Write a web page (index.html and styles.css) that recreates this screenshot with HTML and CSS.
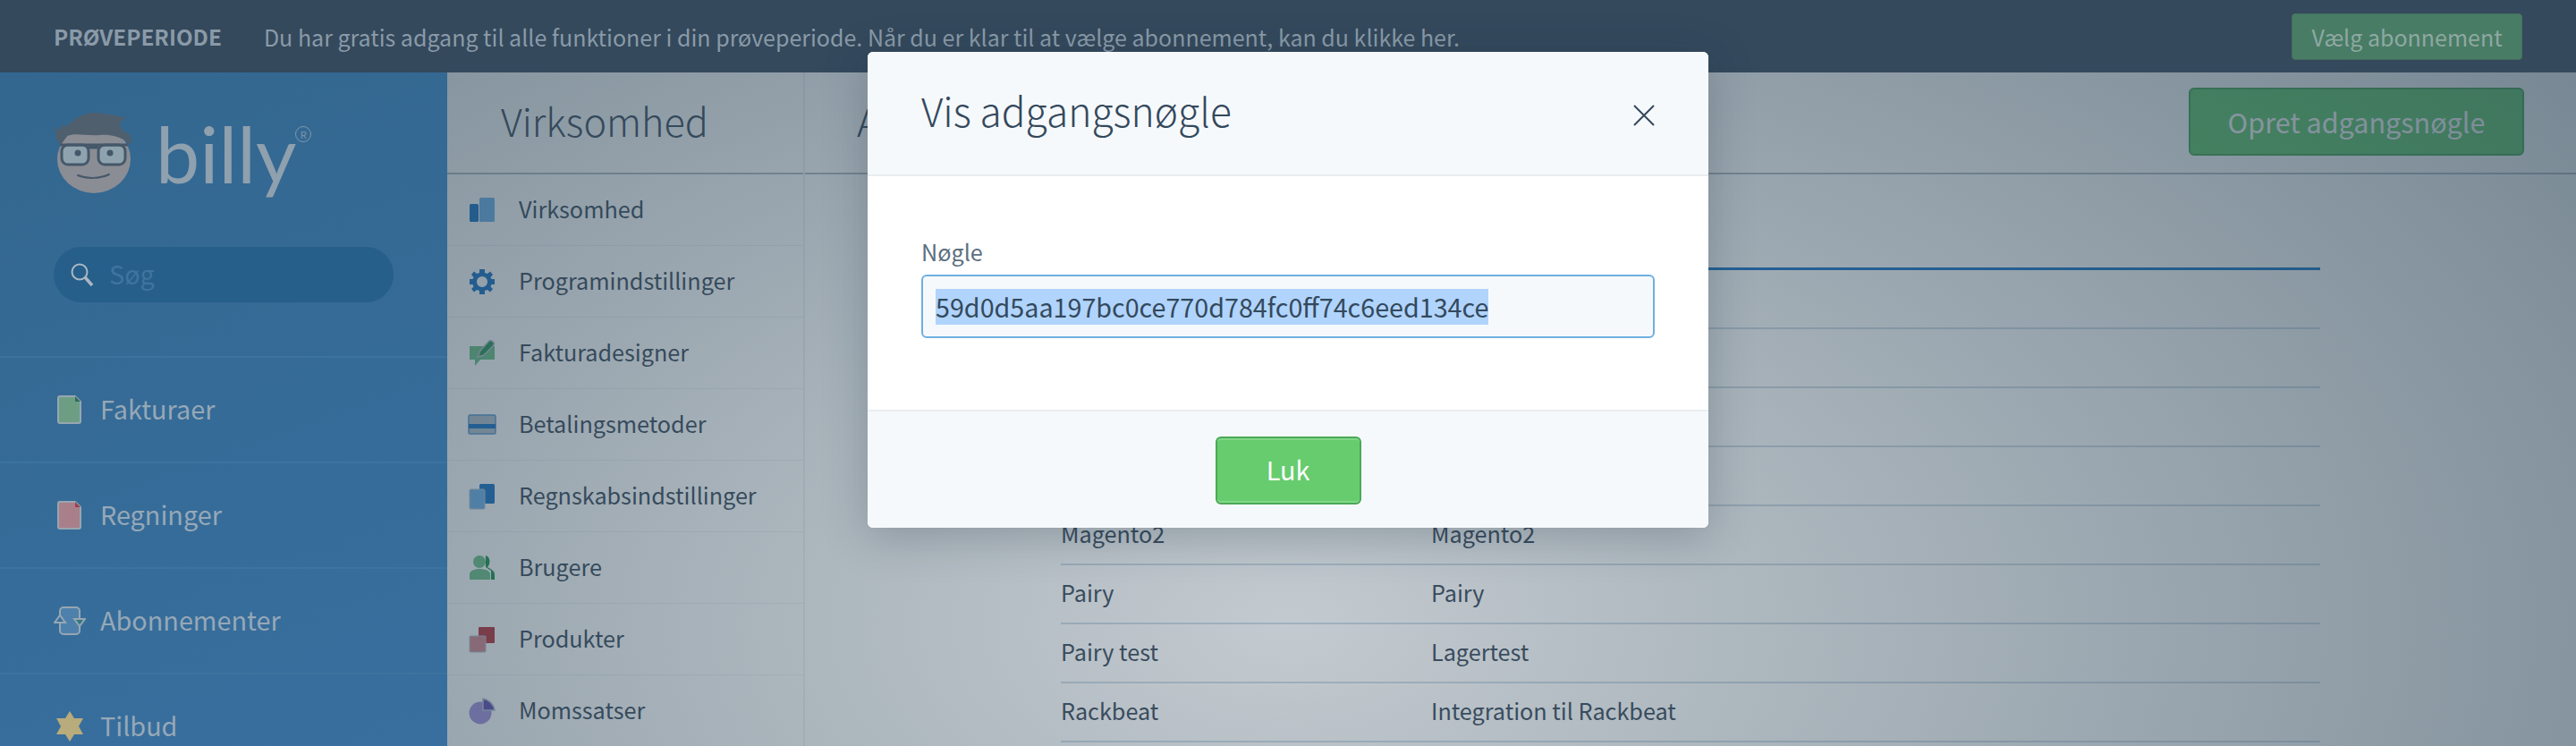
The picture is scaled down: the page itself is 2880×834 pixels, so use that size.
FILE: index.html
```html
<!DOCTYPE html>
<html lang="da">

<head>
	<meta charset="UTF-8">
	<title>Vis adgangsnøgle</title>
	<link rel="stylesheet" href="styles.css">
</head>

<body>
	<div class="topbar">
		<span class="trial-label">PRØVEPERIODE</span>
		<span class="trial-text">Du har gratis adgang til alle funktioner i din prøveperiode. Når du er klar til at vælge abonnement, kan du klikke her.</span>
		<a class="trial-button">Vælg abonnement</a>
	</div>

	<div class="layout">
		<div class="sidebar">
			<div class="logo">
				<svg class="logo-face" width="88" height="92" viewBox="0 0 88 92">
					<ellipse cx="44" cy="52" rx="41" ry="38" fill="#8b8d94"/>
					<path d="M0 16 L5 20 L10 12 L13 16 C22 6 34 0 44 0 C56 0 68 3 80 6 C74 9 72 11 73 15 L78 21 L84 24 L87 36 L80 32 C72 26 60 24 50 25 C36 26 22 22 14 26 L7 36 L2 30 Z" fill="#4f5f6e"/>
					<rect x="8" y="36" width="30" height="22" rx="7" fill="#8ea3ae" stroke="#45586a" stroke-width="3"/>
					<rect x="49" y="36" width="30" height="22" rx="7" fill="#8ea3ae" stroke="#45586a" stroke-width="3"/>
					<path d="M6 36 H82 M38 39 H49" stroke="#45586a" stroke-width="3" fill="none"/>
					<circle cx="26" cy="45" r="3.500" fill="#45586a"/>
					<circle cx="62" cy="45" r="3.500" fill="#45586a"/>
					<path d="M26 70 C36 74 50 74 61 69" stroke="#45586a" stroke-width="2" fill="none" stroke-linecap="round"/>
				</svg>
				<span class="logo-text">billy</span>
				<span class="logo-reg">R</span>
			</div>
			<div class="search">
				<svg width="28" height="28" viewBox="0 0 28 28">
					<circle cx="11" cy="11" r="8.500" fill="none" stroke="#a9b7c3" stroke-width="2"/>
					<path d="M17 17 L25 26" stroke="#a9b7c3" stroke-width="3.500"/>
				</svg>
				<span>Søg</span>
			</div>
			<div class="nav">
				<div class="nav-item">
					<svg width="36" height="34" viewBox="0 0 36 34">
						<path d="M7 2 H24 L30 8 V30 Q30 32 28 32 H7 Q5 32 5 30 V4 Q5 2 7 2 Z" fill="#6d9e84" stroke="#97a6b2" stroke-width="2"/>
						<path d="M24 2 L30 8 H24 Z" fill="#2f6e5a"/>
					</svg>
					Fakturaer
				</div>
				<div class="nav-item">
					<svg width="36" height="34" viewBox="0 0 36 34">
						<path d="M7 2 H24 L30 8 V30 Q30 32 28 32 H7 Q5 32 5 30 V4 Q5 2 7 2 Z" fill="#a9808a" stroke="#97a6b2" stroke-width="2"/>
						<path d="M24 2 L30 8 H24 Z" fill="#9e3f4c"/>
					</svg>
					Regninger
				</div>
				<div class="nav-item">
					<svg width="36" height="34" viewBox="0 0 36 34">
						<rect x="7" y="2" width="22" height="30" rx="4" fill="#4d81ab" stroke="#97a6b2" stroke-width="2"/>
						<path d="M1 19 L7 11 L13 19 Z" fill="#35709f" stroke="#97a6b2" stroke-width="2"/>
						<path d="M23 15 L29 23 L35 15 Z" fill="#2f7a80" stroke="#97a6b2" stroke-width="2"/>
					</svg>
					Abonnementer
				</div>
				<div class="nav-item">
					<svg width="36" height="34" viewBox="0 0 36 34">
						<path d="M18 0 L23 8 L33 8 L28 17 L33 26 L23 26 L18 34 L13 26 L3 26 L8 17 L3 8 L13 8 Z" fill="#b8ab7c"/>
					</svg>
					Tilbud
				</div>
			</div>
		</div>

		<div class="settings">
			<div class="settings-title">Virksomhed</div>
			<div class="settings-item">
				<svg width="30" height="30" viewBox="0 0 30 30">
					<rect x="1" y="8" width="10" height="20" rx="1.500" fill="#1f78c8"/>
					<rect x="12" y="1" width="17" height="27" rx="1.500" fill="#72b4ec"/>
				</svg>
				Virksomhed
			</div>
			<div class="settings-item">
				<svg width="30" height="30" viewBox="0 0 30 30">
					<path d="M15 9 A6 6 0 1 0 15.010 9 Z M12 1 H18 V5 L21 6 L24 3.500 L27 7 L24.500 10 L25.500 12 H29 V18 H25.500 L24.500 20.500 L27 23 L24 26.500 L21 24 L18 25 V29 H12 V25 L9 24 L6 26.500 L3 23 L5.500 20.500 L4.500 18 H1 V12 H4.500 L5.500 10 L3 7 L6 3.500 L9 6 L12 5 Z" fill="#1f78c8" fill-rule="evenodd"/>
				</svg>
				Programindstillinger
			</div>
			<div class="settings-item">
				<svg width="30" height="30" viewBox="0 0 30 30">
					<path d="M1 7 H29 V22 H13 L7 29 V22 H1 Z" fill="#6fc48a"/>
					<path d="M10 19 L13 12 L23 1 Q26 0 28 3 Q29 5 27 7 L17 17 Z" fill="#2e9a58" stroke="#b9c3ca" stroke-width="1.500"/>
				</svg>
				Fakturadesigner
			</div>
			<div class="settings-item">
				<svg class="card-icon" width="32" height="30" viewBox="0 0 32 30">
					<rect x="1" y="4" width="30" height="21" rx="1.500" fill="#b5c2cd" stroke="#5e9ad0" stroke-width="1.500"/>
					<rect x="1" y="14" width="30" height="5" fill="#1f78c8"/>
				</svg>
				Betalingsmetoder
			</div>
			<div class="settings-item">
				<svg width="30" height="30" viewBox="0 0 30 30">
					<rect x="12" y="1" width="17" height="22" rx="1.500" fill="#1f78c8"/>
					<rect x="1" y="7" width="17" height="22" rx="1.500" fill="#72b4ec" stroke="#b5c2cd"/>
				</svg>
				Regnskabsindstillinger
			</div>
			<div class="settings-item">
				<svg width="30" height="30" viewBox="0 0 30 30">
					<path d="M19 1 C24 2 25 10 21 14 C24 16 29 18 29 22 V28 H25 V18 L19 14 Z" fill="#1e9a4e"/>
					<circle cx="12" cy="8" r="7" fill="#74c48e"/>
					<path d="M1 28 V22 C1 18 7 16 12 16 C18 16 24 18 24 22 V28 Z" fill="#74c48e"/>
				</svg>
				Brugere
			</div>
			<div class="settings-item">
				<svg width="30" height="30" viewBox="0 0 30 30">
					<rect x="11" y="1" width="18" height="18" rx="1" fill="#bb3a40"/>
					<rect x="1" y="11" width="18" height="18" rx="1" fill="#d88b92" stroke="#b5c2cd"/>
				</svg>
				Produkter
			</div>
			<div class="settings-item">
				<svg width="30" height="30" viewBox="0 0 30 30">
					<circle cx="13" cy="17" r="12.500" fill="#a794e0"/>
					<path d="M16 1 C22 2 28 7 29 14 H16 Z" fill="#6850b8" stroke="#b5c2cd" stroke-width="1.500"/>
				</svg>
				Momssatser
			</div>
		</div>

		<div class="main">
			<div class="main-head">
				<span class="main-title">A</span>
				<a class="green-button">Opret adgangsnøgle</a>
			</div>
			<div class="keys">
				<div class="keys-row"></div>
				<div class="keys-row"></div>
				<div class="keys-row"></div>
				<div class="keys-row"></div>
				<div class="keys-row"><span>Magento2</span><span>Magento2</span></div>
				<div class="keys-row"><span>Pairy</span><span>Pairy</span></div>
				<div class="keys-row"><span>Pairy test</span><span>Lagertest</span></div>
				<div class="keys-row"><span>Rackbeat</span><span>Integration til Rackbeat</span></div>
			</div>
		</div>
	</div>

	<div class="backdrop"></div>

	<div class="modal">
		<div class="modal-head">
			<span class="modal-title">Vis adgangsnøgle</span>
			<svg class="modal-close" width="24" height="24" viewBox="0 0 24 24">
				<path d="M1 1 L23 23 M23 1 L1 23" stroke="#34495c" stroke-width="2" fill="none"/>
			</svg>
		</div>
		<div class="modal-body">
			<div class="key-label">Nøgle</div>
			<div class="key-input"><span class="key-value">59d0d5aa197bc0ce770d784fc0ff74c6eed134ce</span></div>
		</div>
		<div class="modal-foot">
			<a class="close-button">Luk</a>
		</div>
	</div>
</body>

</html>
```

FILE: styles.css
```css
* {
	box-sizing: border-box;
}

body {
	margin: 0;
	height: 834px;
	overflow: hidden;
	background-color: white;
	color: #425162;
	font-family: "Noto Sans CJK SC", "Liberation Sans", sans-serif;
	font-size: 25.200px;
}

.topbar {
	display: flex;
	align-items: center;
	height: 81px;
	padding: 0 60px;
	background-color: #34495c;
	color: #8a9aa8;
	font-size: 25px;
}

.trial-label {
	margin-right: 47px;
	font-size: 24.300px;
	font-weight: bold;
}

.trial-button {
	width: 258px;
	height: 52px;
	margin-left: auto;
	line-height: 50px;
	text-align: center;
	border: 1px solid #44705f;
	border-radius: 4px;
	background-color: #487c65;
	color: #8fa8a2;
}

.layout {
	display: flex;
	height: 753px;
}

.sidebar {
	width: 500px;
	flex-shrink: 0;
	background: linear-gradient(160deg, #33678f, #386f9f);
}

.logo {
	display: flex;
	align-items: flex-start;
	height: 142px;
	padding: 45px 0 0 61px;
}

.logo-text {
	margin: -13px 0 0 25px;
	font-family: Lato, sans-serif;
	font-size: 88px;
	line-height: 116px;
	color: #8fa0ae;
}

.logo-reg {
	width: 18px;
	height: 18px;
	margin: 15px 0 0 -1px;
	border: 1px solid #7f96aa;
	border-radius: 50%;
	font-size: 11px;
	line-height: 16px;
	text-align: center;
	color: #7f96aa;
}

.search {
	display: flex;
	align-items: center;
	gap: 16px;
	width: 380px;
	height: 62px;
	margin-left: 60px;
	margin-top: 53px;
	padding-left: 18px;
	border-radius: 31px;
	background-color: #265f8a;
	color: #3f759e;
	font-size: 28.800px;
}

.search span {
	margin-bottom: 3px;
}

.nav {
	margin-top: 60px;
}

.nav-item {
	display: flex;
	align-items: center;
	gap: 16px;
	height: 118px;
	padding: 0 0 4px 60px;
	border-top: 2px solid #3c739f;
	color: #96a8b7;
	font-size: 28.800px;
}

.nav-item svg {
	margin-top: 4px;
}

.settings {
	width: 400px;
	flex-shrink: 0;
	border-right: 2px solid rgba(66, 81, 98, 0.08);
}

.settings-title {
	display: flex;
	align-items: center;
	height: 114px;
	padding: 0 0 6px 60px;
	border-bottom: 2px solid #b4bec6;
	font-size: 43.200px;
	font-weight: 300;
}

.settings-item {
	display: flex;
	align-items: center;
	gap: 26px;
	height: 80px;
	padding: 0 0 4px 24px;
	border-bottom: 1px solid #eef1f4;
}

.settings-item svg {
	margin-top: 4px;
}

.settings-item .card-icon {
	margin: 4px -1px 0;
}

.main {
	flex: 1;
}

.main-head {
	display: flex;
	align-items: center;
	justify-content: space-between;
	height: 114px;
	padding: 0 58px;
	border-bottom: 2px solid #b4bec6;
}

.main-title {
	margin-bottom: 6px;
	font-size: 43.200px;
	font-weight: 300;
}

.green-button {
	width: 375px;
	height: 76px;
	margin-top: -2px;
	line-height: 72px;
	text-align: center;
	border: 2px solid #4aa956;
	border-radius: 6px;
	background-color: #66cc6e;
	color: white;
	font-size: 30.500px;
}

.keys {
	width: 1408px;
	margin: 104px 0 0 286px;
	border-top: 3px solid #1f78c8;
}

.keys-row {
	display: grid;
	grid-template-columns: 414px 1fr;
	align-items: center;
	height: 66px;
	padding-bottom: 4px;
	border-bottom: 2px solid #d0dce6;
}

.backdrop {
	position: absolute;
	top: 81px;
	left: 500px;
	right: 0;
	bottom: 0;
	background: radial-gradient(ellipse 1900px 1100px at 940px 619px, rgba(40, 66, 85, 0.28), rgba(40, 66, 85, 0.65));
}

.modal {
	position: absolute;
	top: 58px;
	left: 970px;
	width: 940px;
	height: 532px;
	display: flex;
	flex-direction: column;
	border-radius: 6px;
	overflow: hidden;
	background-color: white;
	box-shadow: 0 10px 50px rgba(20, 40, 55, 0.25);
	color: #34495c;
}

.modal-head {
	display: flex;
	align-items: center;
	justify-content: space-between;
	height: 139px;
	padding: 0 60px;
	border-bottom: 2px solid #e8edf0;
	background-color: #f6f9fc;
}

.modal-title {
	margin-bottom: 8px;
	font-size: 44.300px;
	font-weight: 300;
}

.modal-close {
	margin-top: 5px;
}

.modal-body {
	flex: 1;
	padding: 65px 60px 0;
}

.key-label {
	height: 45px;
	line-height: 38px;
	color: #5c6f7f;
}

.key-input {
	display: flex;
	align-items: center;
	height: 71px;
	padding-left: 14px;
	border: 2px solid #6eb0e0;
	border-radius: 6px;
	background-color: #f6f9fc;
}

.key-value {
	height: 40px;
	line-height: 40px;
	background-color: #b0d4fc;
	font-size: 28.700px;
}

.modal-foot {
	display: flex;
	justify-content: center;
	height: 132px;
	padding-top: 28px;
	border-top: 2px solid #e8edf0;
	background-color: #f6f9fc;
}

.close-button {
	width: 163px;
	height: 76px;
	line-height: 70px;
	text-align: center;
	border: 2px solid #4aa956;
	border-radius: 6px;
	background-color: #66cc6e;
	box-shadow: inset 0 2px 0 #82d888, inset 0 -2px 0 #82d888;
	color: white;
	font-size: 28.800px;
}
```
